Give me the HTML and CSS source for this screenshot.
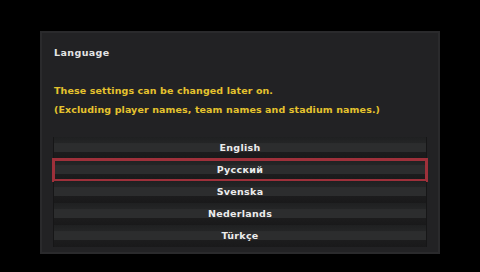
FILE: index.html
```html
<!DOCTYPE html>
<html lang="en">
<head>
<meta charset="UTF-8">
<title>Language</title>
<link rel="stylesheet" href="styles.css">
</head>
<body>
<div class="panel">
<div class="title">Language</div>
<div class="note">These settings can be changed later on.<br>(Excluding player names, team names and stadium names.)</div>
<div class="list">
<div class="row">English</div>
<div class="row sel">Русский</div>
<div class="row">Svenska</div>
<div class="row">Nederlands</div>
<div class="row">Türkçe</div>
</div>
</div>
</body>
</html>
```

FILE: styles.css
```css
body{background:#000;margin:0;font-family:"DejaVu Sans",sans-serif;font-weight:bold;font-size:9.5px;letter-spacing:0.1px}
.panel{box-sizing:border-box;width:400px;height:223px;margin:31px 0 0 40px;padding:14px 12px 0 12px;background:#222224;border:2px solid #2a2a2c}
.title{line-height:12px;color:#e4e4e4;letter-spacing:0.4px}
.note{margin-top:22px;line-height:19px;color:#e5c22e}
.list{margin:18px -1px 0 -1px;padding:0 1px;background:#161617}
.row{position:relative;height:22px;line-height:22px;text-align:center;color:#ececec;letter-spacing:0.3px;background:linear-gradient(#1f2021 0,#242526 26%,#2c2d2e 30%,#2c2d2e 66%,#1c1c1d 70%,#19191a 100%)}
.sel::after{content:"";position:absolute;top:-1px;bottom:-1px;left:-2px;right:-2px;border:3px solid #9e303a}
```
